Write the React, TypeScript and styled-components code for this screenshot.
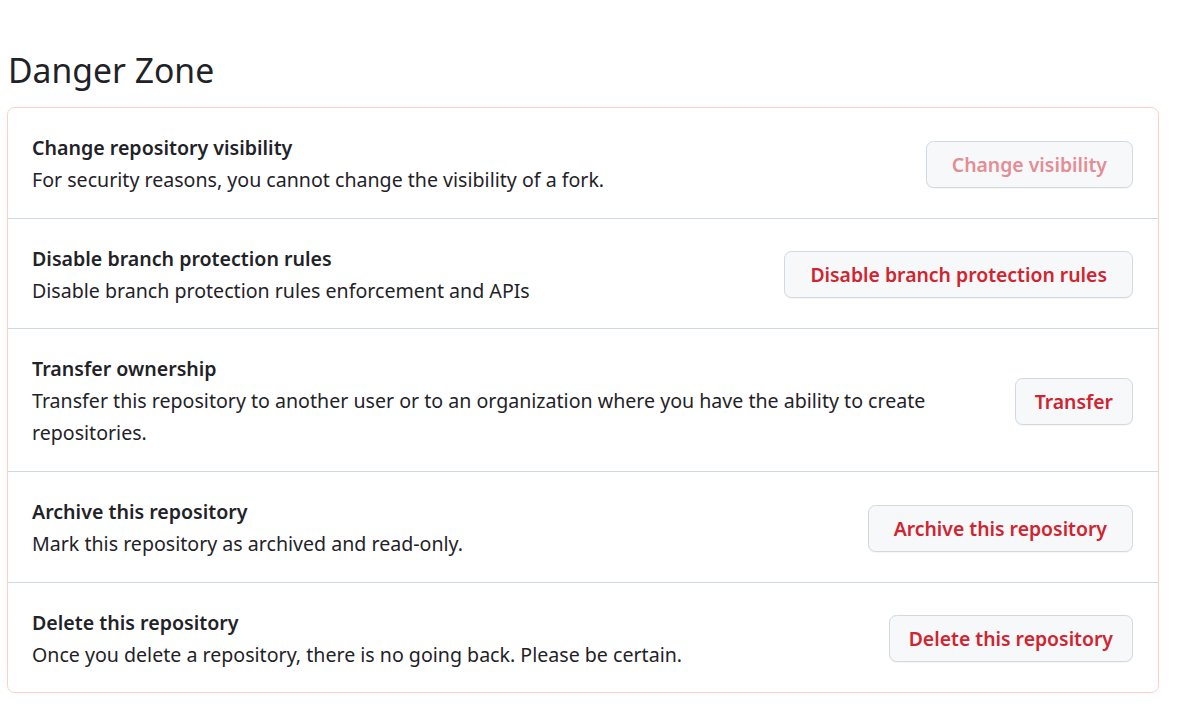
import styled, { createGlobalStyle } from 'styled-components'

const GlobalStyle = createGlobalStyle`
  html, body {
    margin: 0;
    padding: 0;
    background: #ffffff;
  }
  body {
    font-family: "Noto Sans", "Open Sans", sans-serif;
    color: #1f2328;
  }
`

const Page = styled.div`
  padding: 0 18px 0 7px;
`

const Heading = styled.h2`
  margin: 0;
  padding: 47.5px 0 14.5px 1px;
  font-size: 33.7px;
  font-weight: 400;
  line-height: 45px;
  color: #1f2328;
`

const DangerBox = styled.div`
  border: 1px solid #ffcecb;
  border-radius: 7.5px;
  background: #ffffff;
`

const Row = styled.div`
  display: flex;
  align-items: center;
  gap: 20px;
  padding: 24px 25px 21.7px 24px;
  & + & {
    border-top: 1px solid #d1d9e0;
  }
`

const Info = styled.div`
  flex: 1 1 auto;
  min-width: 0;
`

const Title = styled.div`
  font-size: 19.6px;
  font-weight: 600;
  line-height: 32px;
`

const Desc = styled.p`
  margin: 0;
  font-size: 19.6px;
  line-height: 32px;
`

const DangerButton = styled.button<{ $disabled?: boolean; $compact?: boolean }>`
  flex: none;
  height: 47px;
  padding: 0 ${({ $compact }) => ($compact ? '19px' : '25px')};
  border: 1px solid #d1d9e0;
  border-radius: 7.5px;
  background: #f6f8fa;
  box-shadow: 0 1px 0 rgba(31, 35, 40, 0.04);
  font-family: inherit;
  font-size: 19.4px;
  font-weight: 600;
  color: ${({ $disabled }) => ($disabled ? '#e38e94' : '#d1242f')};
  cursor: ${({ $disabled }) => ($disabled ? 'not-allowed' : 'pointer')};
  white-space: nowrap;
`

const rows = [
  {
    title: 'Change repository visibility',
    desc: 'For security reasons, you cannot change the visibility of a fork.',
    action: 'Change visibility',
    disabled: true,
  },
  {
    title: 'Disable branch protection rules',
    desc: 'Disable branch protection rules enforcement and APIs',
    action: 'Disable branch protection rules',
  },
  {
    title: 'Transfer ownership',
    desc: 'Transfer this repository to another user or to an organization where you have the ability to create repositories.',
    action: 'Transfer',
    compact: true,
  },
  {
    title: 'Archive this repository',
    desc: 'Mark this repository as archived and read-only.',
    action: 'Archive this repository',
  },
  {
    title: 'Delete this repository',
    desc: 'Once you delete a repository, there is no going back. Please be certain.',
    action: 'Delete this repository',
    compact: true,
  },
]

export default function App() {
  return (
    <Page>
      <GlobalStyle />
      <Heading>Danger Zone</Heading>
      <DangerBox>
        {rows.map((row) => (
          <Row key={row.title}>
            <Info>
              <Title>{row.title}</Title>
              <Desc>{row.desc}</Desc>
            </Info>
            <DangerButton
              $disabled={row.disabled}
              $compact={row.compact}
              disabled={row.disabled}
            >
              {row.action}
            </DangerButton>
          </Row>
        ))}
      </DangerBox>
    </Page>
  )
}
